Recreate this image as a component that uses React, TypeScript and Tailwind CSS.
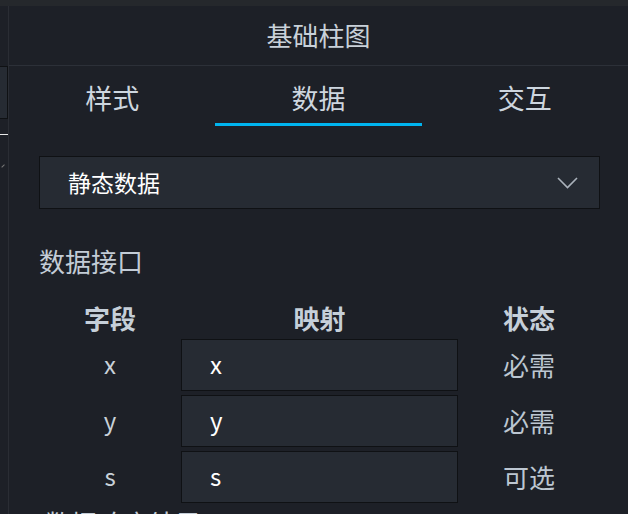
import React from "react";

const rows = [
  { f: "x", v: "x", s: "必需" },
  { f: "y", v: "y", s: "必需" },
  { f: "s", v: "s", s: "可选" },
];

export default function App() {
  return (
    <div
      className="w-[628px] h-[514px] overflow-hidden bg-[#1d2027] flex flex-col"
      style={{ fontFamily: '"Noto Sans CJK SC", "Noto Sans", sans-serif' }}
    >
      <div className="h-[6px] bg-[#25282c] shrink-0" />
      <div className="flex flex-1 min-h-0 items-start">
        {/* left strip */}
        <div className="w-[9px] h-full shrink-0 border-r border-[#2a2d34] flex flex-col">
          <div className="h-[60px] shrink-0" />
          <div className="h-[53px] shrink-0 bg-[#262b33] border border-l-0 border-[#0f1114]" />
          <div className="h-[15px] shrink-0" />
          <div className="h-[1px] w-[8px] shrink-0 bg-[#e8e8e8]" />
          <div className="h-[28px] shrink-0" />
          <div className="w-[4px] h-[4px] shrink-0 border-b border-[#777] -rotate-45" />
        </div>
        {/* main */}
        <div className="flex-1 flex flex-col">
          <div className="h-[60px] shrink-0 border-b border-[#2c3038] flex items-center justify-center text-[26px] text-[#c9d1d9] leading-none pb-[2px]">
            基础柱图
          </div>
          <div className="grid grid-cols-3 h-[60px] shrink-0">
            {["样式", "数据", "交互"].map((t, i) => (
              <div key={t} className="flex flex-col">
                <div className="flex-1 flex items-center justify-center text-[27px] text-[#cdd6df] leading-none pt-[5px]">
                  {t}
                </div>
                <div className={i === 1 ? "h-[3px] bg-[#00b4ef]" : "h-[3px]"} />
              </div>
            ))}
          </div>
          <div className="pl-[30px] pr-[28px] flex flex-col shrink-0">
            <div className="mt-[30px] h-[53px] shrink-0 bg-[#262b33] border border-[#0f1114] flex items-center justify-between pl-[28px] pr-[21px]">
              <span className="text-[23px] text-white leading-none">静态数据</span>
              <svg width="21" height="12" viewBox="0 0 21 12" fill="none">
                <polyline points="1,1 10.5,10.5 20,1" stroke="#aab2bb" strokeWidth="1.6" />
              </svg>
            </div>
            <div className="mt-[34px] h-[36px] shrink-0 flex items-center text-[26px] text-[#c3ccd6] leading-none">
              数据接口
            </div>
            <div className="mt-[17px] grid grid-cols-[142px_277px_142px] h-[43px] shrink-0 items-center text-center text-[26px] font-bold text-[#c5cfd9] leading-none">
              <div>字段</div>
              <div>映射</div>
              <div>状态</div>
            </div>
            <div className="flex flex-col gap-[4px] shrink-0">
              {rows.map((r) => (
                <div key={r.f} className="grid grid-cols-[142px_277px_142px] h-[52px] shrink-0 items-center leading-none">
                  <div className="text-center text-[24px] text-[#c8d0d8] pb-[3px]">{r.f}</div>
                  <div className="h-full bg-[#262b33] border border-[#0f1114] flex items-center pl-[28px] text-[24px] text-white pb-[3px]">
                    {r.v}
                  </div>
                  <div className="text-center text-[26px] text-[#bcc6d1]">{r.s}</div>
                </div>
              ))}
            </div>
            <div className="mt-[2px] h-[36px] shrink-0 flex items-center text-[26px] text-[#c3ccd6] leading-none pl-[6px]">
              数据响应结果
            </div>
          </div>
        </div>
      </div>
    </div>
  );
}
